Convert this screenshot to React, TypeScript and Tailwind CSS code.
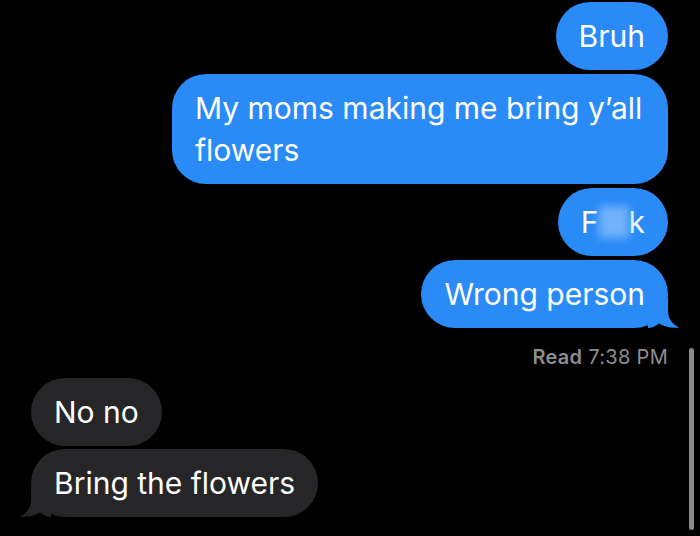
import React from 'react';

const font = { fontFamily: 'Inter, "Noto Sans", sans-serif' };

const BlueTail = () => (
  <svg className="absolute right-[-12px] bottom-0" width="32" height="30" viewBox="0 0 32 30">
    <path d="M20 0 L20 12 C20 21 24 26 31 29.5 C23 30.5 16 28.5 11 25.5 C7 28.5 3 30 0 30 L0 0 Z" fill="#2a8af6" />
  </svg>
);

const GrayTail = () => (
  <svg className="absolute left-[-12px] bottom-0" width="32" height="30" viewBox="0 0 32 30">
    <path d="M12 0 L12 12 C12 21 8 26 1 29.5 C9 30.5 16 28.5 21 25.5 C25 28.5 29 30 32 30 L32 0 Z" fill="#262628" />
  </svg>
);

type BubbleProps = { children: React.ReactNode; tail?: boolean; className?: string };

const Sent: React.FC<BubbleProps> = ({ children, tail, className }) => (
  <div className={`relative bg-[#2a8af6] text-white text-[30px] leading-[42px] px-[23px] py-[13px] rounded-[34px] ${className ?? ''}`}>
    <span className="relative z-10">{children}</span>
    {tail && <BlueTail />}
  </div>
);

const Received: React.FC<BubbleProps> = ({ children, tail }) => (
  <div className="relative bg-[#262628] text-white text-[30px] leading-[42px] px-[23px] py-[13px] rounded-[34px]">
    <span className="relative z-10">{children}</span>
    {tail && <GrayTail />}
  </div>
);

export default function App() {
  return (
    <div className="relative w-[700px] h-[536px] bg-black overflow-hidden" style={font}>
      <div className="flex flex-col items-end gap-[4px] pr-[32px] pt-[2px]">
        <Sent>Bruh</Sent>
        <Sent className="max-w-[496px] rounded-[30px]">My moms making me bring y’all flowers</Sent>
        <Sent>
          <span className="inline-flex items-center">
            F
            <span className="inline-block w-[30px] h-[32px] bg-[#72b2fc] blur-[4px]" />
            k
          </span>
        </Sent>
        <Sent tail>Wrong person</Sent>
        <div className="mt-[13px] text-[20px] leading-[24px] tracking-[0.3px] text-[#8d8d92]">
          <span className="font-semibold">Read</span> 7:38 PM
        </div>
      </div>
      <div className="flex flex-col items-start gap-[3px] pl-[31px] mt-[9px]">
        <Received>No no</Received>
        <Received tail>Bring the flowers</Received>
      </div>
      <div className="absolute right-[6px] top-[348px] w-[5px] h-[182px] rounded-full bg-[#8a8a8a]" />
    </div>
  );
}
